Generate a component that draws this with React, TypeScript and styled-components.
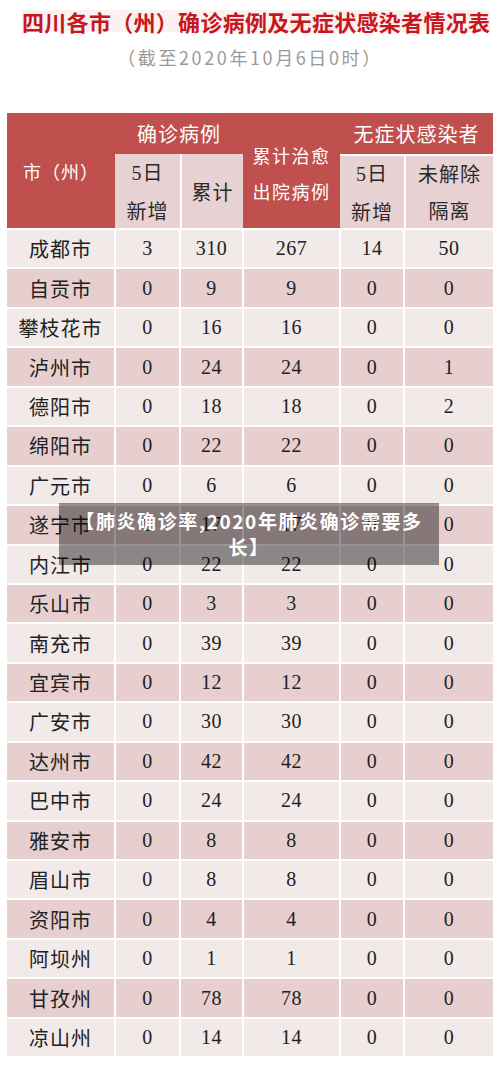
import React from "react";
import styled, { createGlobalStyle } from "styled-components";

const GlobalStyle = createGlobalStyle`
  html, body {
    margin: 0;
    padding: 0;
    background: #ffffff;
  }
  body {
    font-family: "Noto Sans CJK SC", "Noto Sans", sans-serif;
  }
`;

const RED = "#c0504d";
const PINK = "#e7d1d2";
const LIGHT = "#f2e9e9";
const DARK = "#e7cfd0";

const Page = styled.div`
  position: relative;
  width: 500px;
  height: 1068px;
  overflow: hidden;
  padding-top: 10px;
  box-sizing: border-box;
`;

const TitleWrap = styled.div`
  padding-left: 22px;
  height: 22px;
`;

const Title = styled.h1`
  display: inline-block;
  margin: 0;
  background: #faf1f1;
  color: #c8161d;
  font-size: 22px;
  line-height: 22px;
  font-weight: 700;
  letter-spacing: 0.3px;
  white-space: nowrap;
`;

const Subtitle = styled.div`
  margin-top: 13px;
  text-align: center;
  color: #9a9a9a;
  font-size: 18px;
  line-height: 24px;
  letter-spacing: 2.6px;
`;

const Table = styled.div`
  margin: 44px 7px 0 7px;
  width: 486px;
`;

const Header = styled.div`
  display: grid;
  grid-template-columns: 108px 65px 63px 97px 64px 89px;
  grid-template-rows: 41px 74px;
  background: ${RED};
`;

const HeadCell = styled.div<{ $col: string; $row: string }>`
  grid-column: ${(p) => p.$col};
  grid-row: ${(p) => p.$row};
  display: flex;
  align-items: center;
  justify-content: center;
  text-align: center;
  color: #ffffff;
  font-size: ${(p) => (p.$row === "1 / 3" ? "18px" : "20px")};
  letter-spacing: 1px;
`;

const CureCell = styled(HeadCell)`
  font-size: 18px;
  line-height: 36px;
  letter-spacing: 1.5px;
  padding-top: 4px;
  box-sizing: border-box;
`;

const SubCell = styled.div<{ $col: number; $left?: boolean; $top?: boolean }>`
  grid-column: ${(p) => p.$col};
  grid-row: 2;
  background: ${PINK};
  border-left: ${(p) => (p.$left ? "2px solid #fff" : "none")};
  border-top: ${(p) => (p.$top ? "2px solid #fff" : "none")};
  display: flex;
  align-items: center;
  justify-content: center;
  text-align: center;
  color: #2a2a2a;
  font-size: 20px;
  line-height: 37px;
  letter-spacing: 1px;
`;

const Num = styled.span`
  font-family: "Liberation Serif", serif;
`;

const Body = styled.div`
  display: grid;
  grid-template-columns: 107px 63px 61px 95px 62px 88px;
  grid-auto-rows: 37.45px;
  gap: 2px;
  padding-top: 2px;
  background: #ffffff;
`;

const CityCell = styled.div<{ $dark: boolean }>`
  background: ${(p) => (p.$dark ? DARK : LIGHT)};
  display: flex;
  align-items: center;
  justify-content: center;
  color: #222222;
  font-size: 20px;
  letter-spacing: 1px;
`;

const NumCell = styled(CityCell)`
  font-family: "Liberation Serif", serif;
  letter-spacing: 0.5px;
`;

const Overlay = styled.div`
  position: absolute;
  top: 503px;
  left: 59px;
  width: 380px;
  box-sizing: border-box;
  padding: 5px 8px;
  background: rgba(0, 0, 0, 0.42);
  color: #ffffff;
  font-size: 19px;
  font-weight: 700;
  line-height: 26px;
  letter-spacing: 1.6px;
  text-align: center;
  white-space: nowrap;
`;

const rows: [string, string, string, string, string, string][] = [
  ["成都市", "3", "310", "267", "14", "50"],
  ["自贡市", "0", "9", "9", "0", "0"],
  ["攀枝花市", "0", "16", "16", "0", "0"],
  ["泸州市", "0", "24", "24", "0", "1"],
  ["德阳市", "0", "18", "18", "0", "2"],
  ["绵阳市", "0", "22", "22", "0", "0"],
  ["广元市", "0", "6", "6", "0", "0"],
  ["遂宁市", "0", "17", "17", "0", "0"],
  ["内江市", "0", "22", "22", "0", "0"],
  ["乐山市", "0", "3", "3", "0", "0"],
  ["南充市", "0", "39", "39", "0", "0"],
  ["宜宾市", "0", "12", "12", "0", "0"],
  ["广安市", "0", "30", "30", "0", "0"],
  ["达州市", "0", "42", "42", "0", "0"],
  ["巴中市", "0", "24", "24", "0", "0"],
  ["雅安市", "0", "8", "8", "0", "0"],
  ["眉山市", "0", "8", "8", "0", "0"],
  ["资阳市", "0", "4", "4", "0", "0"],
  ["阿坝州", "0", "1", "1", "0", "0"],
  ["甘孜州", "0", "78", "78", "0", "0"],
  ["凉山州", "0", "14", "14", "0", "0"],
];

export default function App() {
  return (
    <Page>
      <GlobalStyle />
      <TitleWrap>
        <Title>四川各市（州）确诊病例及无症状感染者情况表</Title>
      </TitleWrap>
      <Subtitle>（截至2020年10月6日0时）</Subtitle>

      <Table>
        <Header>
          <HeadCell $col="1" $row="1 / 3">市（州）</HeadCell>
          <HeadCell $col="2 / 4" $row="1">确诊病例</HeadCell>
          <CureCell $col="4" $row="1 / 3">
            累计治愈
            <br />
            出院病例
          </CureCell>
          <HeadCell $col="5 / 7" $row="1">无症状感染者</HeadCell>
          <SubCell $col={2}>
            <div>
              <Num>5</Num>日
              <br />
              新增
            </div>
          </SubCell>
          <SubCell $col={3} $left>
            累计
          </SubCell>
          <SubCell $col={5} $top>
            <div>
              <Num>5</Num>日
              <br />
              新增
            </div>
          </SubCell>
          <SubCell $col={6} $left $top>
            <div>
              未解除
              <br />
              隔离
            </div>
          </SubCell>
        </Header>

        <Body>
          {rows.map((r, i) => (
            <React.Fragment key={r[0]}>
              <CityCell $dark={i % 2 === 1}>{r[0]}</CityCell>
              {r.slice(1).map((v, j) => (
                <NumCell key={j} $dark={i % 2 === 1}>
                  {v}
                </NumCell>
              ))}
            </React.Fragment>
          ))}
        </Body>
      </Table>

      <Overlay>
        【肺炎确诊率,2020年肺炎确诊需要多
        <br />
        长】
      </Overlay>
    </Page>
  );
}
